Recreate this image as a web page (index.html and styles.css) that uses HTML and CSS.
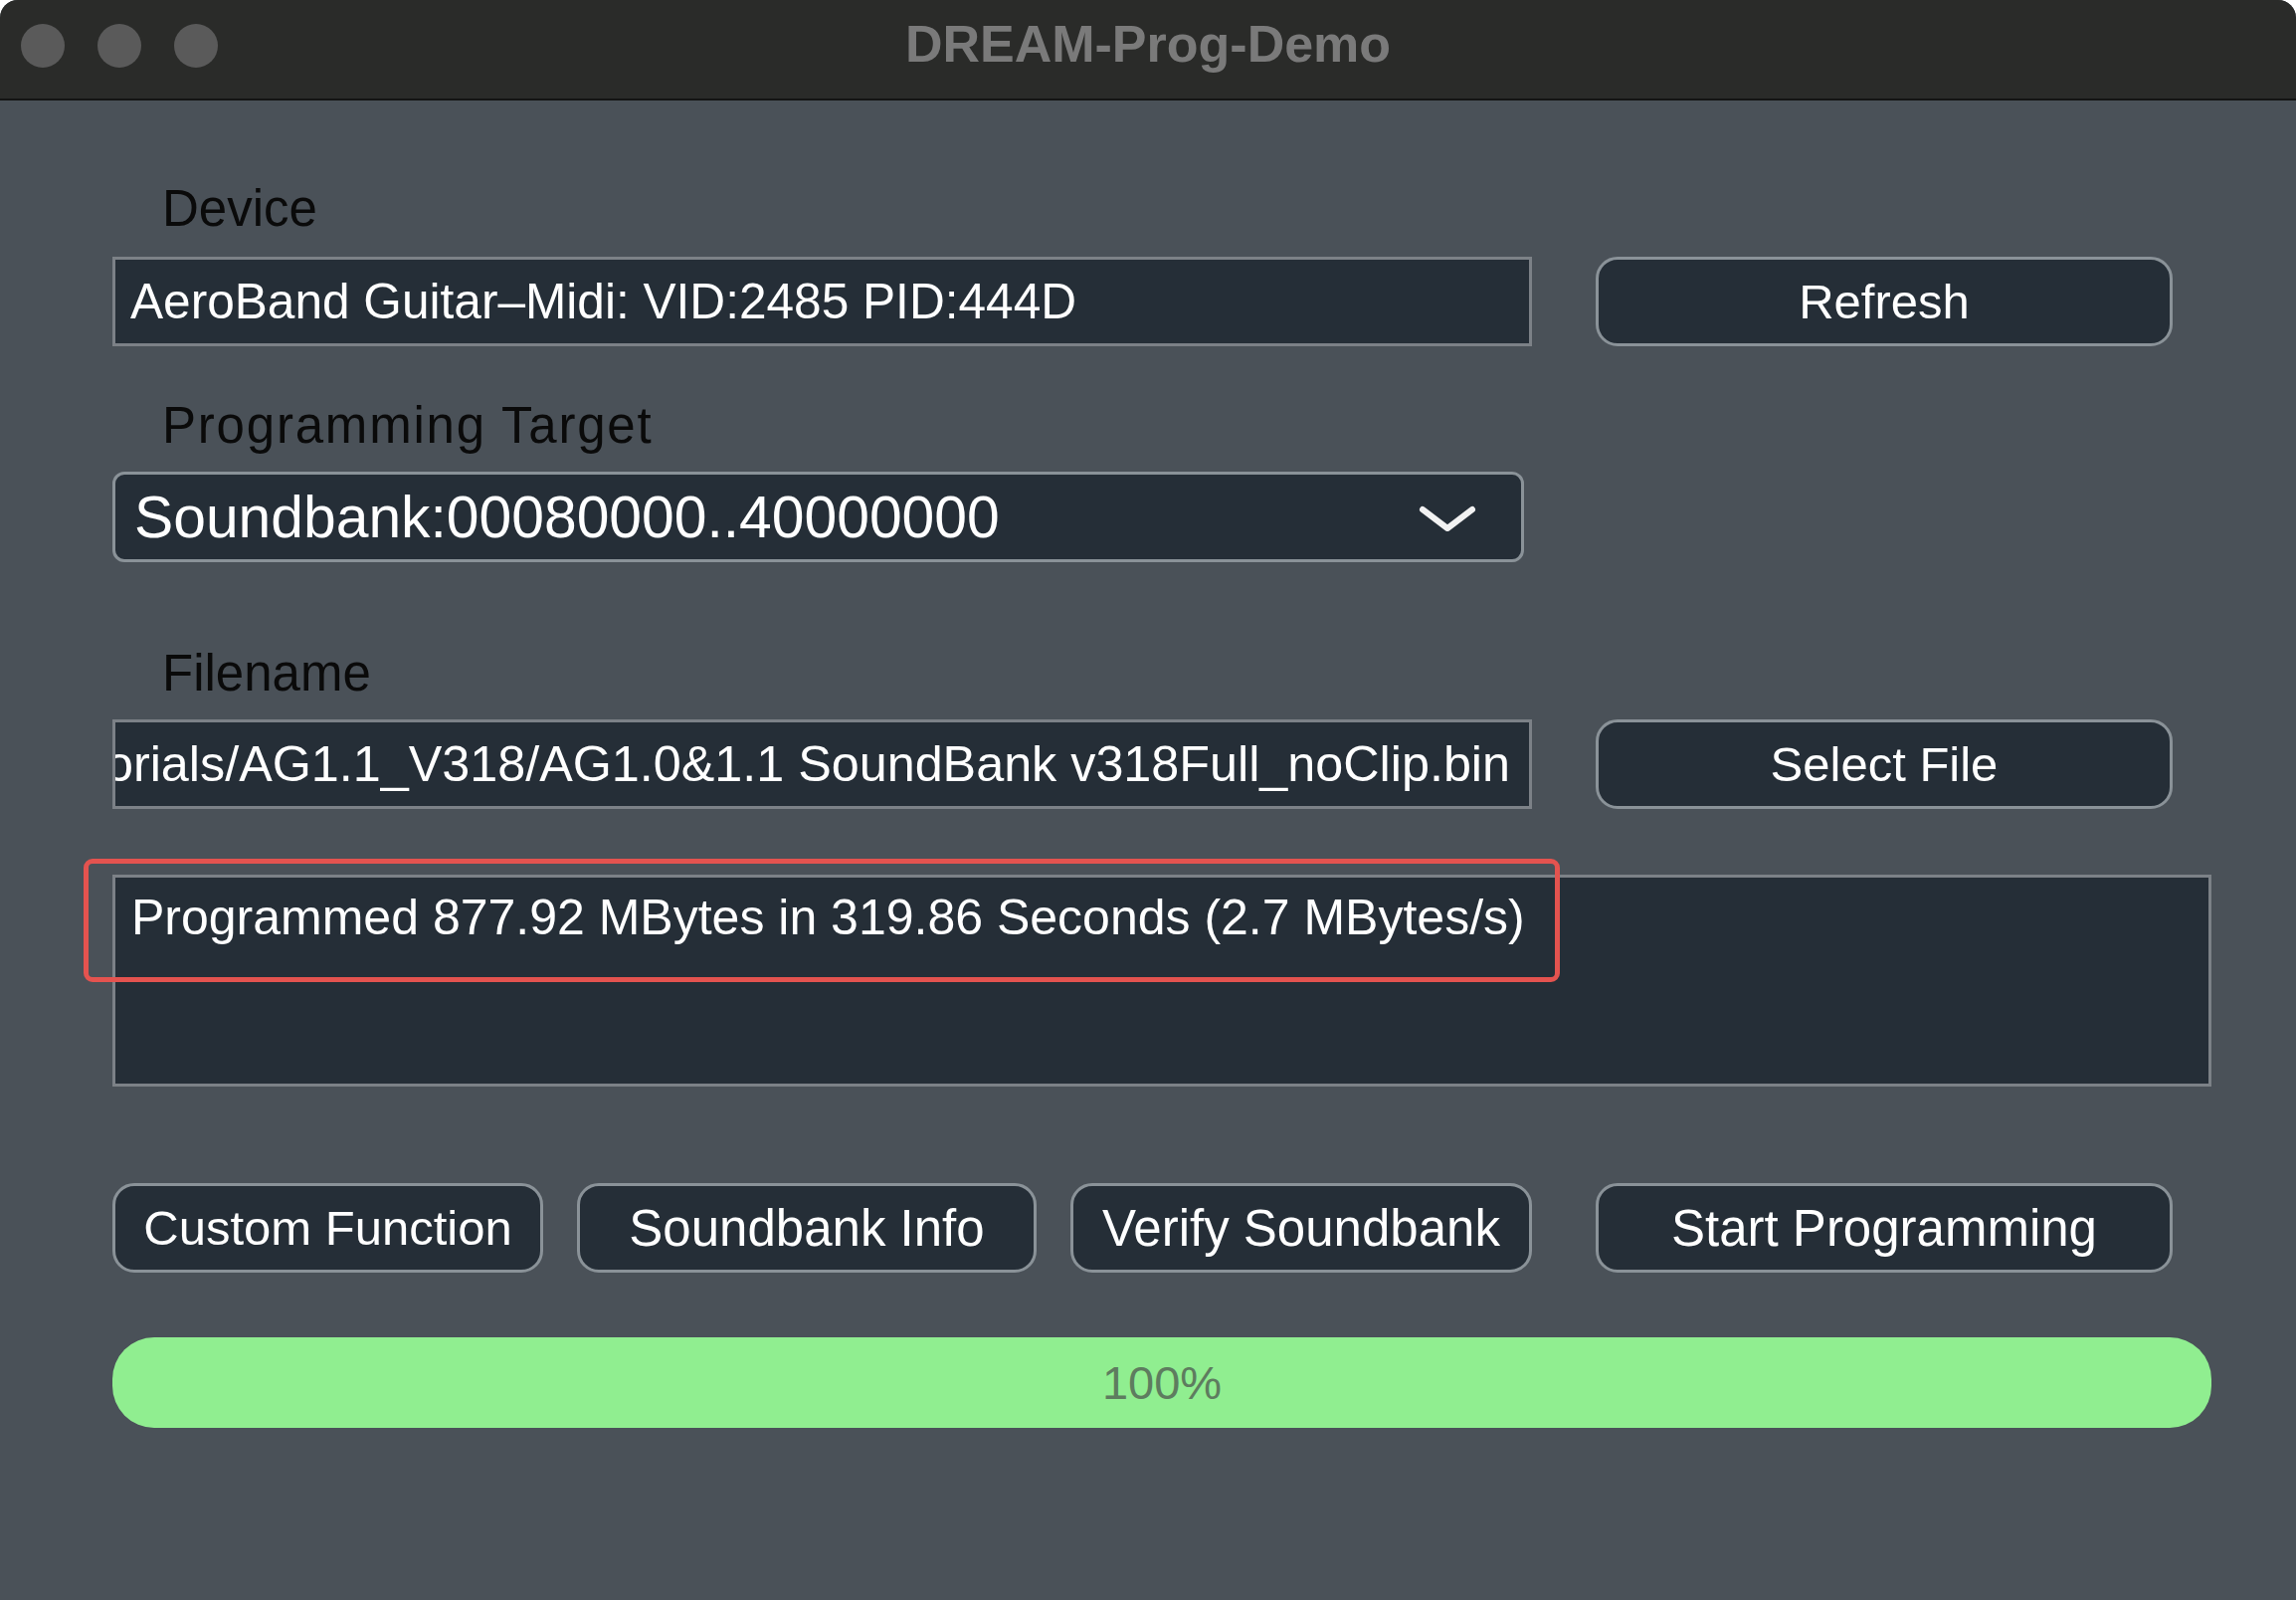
FILE: index.html
```html
<!DOCTYPE html>
<html>
<head>
    <title>DREAM-Prog-Demo</title>
    <link rel="stylesheet" href="styles.css">
</head>
<body>
    <div class="window">
        <div class="titlebar">
            <div class="lights">
                <span class="light"></span>
                <span class="light"></span>
                <span class="light"></span>
            </div>
            <div class="title">DREAM-Prog-Demo</div>
            <div></div>
        </div>

        <div class="content">
            <div class="label">Device</div>
            <div class="row">
                <div class="field">AeroBand Guitar–Midi: VID:2485 PID:444D</div>
                <button class="button">Refresh</button>
            </div>

            <div class="label label-gap label-wide">Programming Target</div>
            <div class="combo">
                <span>Soundbank:00080000..40000000</span>
                <svg class="chevron" width="58" height="28" viewBox="0 0 58 28">
                    <polyline points="4,4 29,23 54,4" fill="none" stroke="#f2f2f2" stroke-width="6" stroke-linecap="round" stroke-linejoin="round"/>
                </svg>
            </div>

            <div class="label label-gap-big">Filename</div>
            <div class="row">
                <div class="field field-path"><span>/Users/demo/Documents/Tutorials/AG1.1_V318/AG1.0&amp;1.1 SoundBank v318Full_noClip.bin</span></div>
                <button class="button">Select File</button>
            </div>

            <div class="log">
                <div class="log-line">Programmed 877.92 MBytes in 319.86 Seconds (2.7 MBytes/s)</div>
                <div class="highlight"></div>
            </div>

            <div class="actions">
                <button class="button btn-custom">Custom Function</button>
                <button class="button btn-info">Soundbank Info</button>
                <button class="button btn-verify">Verify Soundbank</button>
                <button class="button btn-start">Start Programming</button>
            </div>

            <div class="progress">100%</div>
        </div>
    </div>
</body>
</html>
```

FILE: styles.css
```css
body {
    margin: 0;
    background-color: #ffffff;
    font-family: "Liberation Sans", Arial, sans-serif;
}
.window {
    width: 2308px;
    height: 1608px;
    background-color: #4a5158;
    border-radius: 18px 18px 0 0;
    overflow: hidden;
}
.titlebar {
    height: 99px;
    background-color: #2a2b29;
    border-bottom: 2px solid #141414;
    display: grid;
    grid-template-columns: 1fr auto 1fr;
    align-items: center;
}
.lights {
    display: flex;
    gap: 33px;
    padding-left: 21px;
    padding-bottom: 8px;
}
.light {
    width: 44px;
    height: 44px;
    border-radius: 50%;
    background-color: #5a5a5a;
}
.title {
    color: #7a7a7a;
    font-weight: bold;
    font-size: 52px;
    padding-bottom: 12px;
}
.content {
    padding: 79px 0 0 113px;
}
.label {
    height: 60px;
    line-height: 60px;
    padding-left: 50px;
    font-size: 51px;
    color: #0a0a0a;
    margin-bottom: 18px;
}
.label-wide {
    letter-spacing: 1.8px;
}
.label-gap {
    margin-top: 50px;
    margin-bottom: 16px;
}
.label-gap-big {
    margin-top: 82px;
    margin-bottom: 16px;
}
.row {
    display: flex;
    gap: 64px;
}
.field {
    box-sizing: border-box;
    width: 1427px;
    height: 90px;
    line-height: 84px;
    padding: 0 18px 0 15px;
    background-color: #252e37;
    border: 3px solid #7c8187;
    color: #ffffff;
    font-size: 49.6px;
    white-space: nowrap;
    overflow: hidden;
}
.field-path {
    display: flex;
    justify-content: flex-end;
    padding: 0 19px 0 0;
    font-size: 50.3px;
}
.button {
    box-sizing: border-box;
    width: 580px;
    height: 90px;
    background-color: #252e37;
    border: 3px solid #8a9298;
    border-radius: 22px;
    color: #ffffff;
    font-family: "Liberation Sans", Arial, sans-serif;
    font-size: 49px;
    padding: 0;
    cursor: pointer;
}
.combo {
    box-sizing: border-box;
    width: 1419px;
    height: 91px;
    display: flex;
    align-items: center;
    justify-content: space-between;
    padding: 0 45px 0 19px;
    background-color: #252e37;
    border: 3px solid #8a9298;
    border-radius: 12px;
    color: #ffffff;
    font-size: 58.8px;
}
.chevron {
    display: block;
    margin-top: 4px;
}
.log {
    position: relative;
    box-sizing: border-box;
    width: 2110px;
    height: 213px;
    margin-top: 66px;
    background-color: #252e37;
    border: 3px solid #7c8187;
    padding: 10px 0 0 16px;
    color: #ffffff;
    font-size: 50px;
}
.log-line {
    line-height: 60px;
    white-space: nowrap;
}
.highlight {
    position: absolute;
    left: -32px;
    top: -19px;
    width: 1484px;
    height: 124px;
    box-sizing: border-box;
    border: 5px solid #e4534f;
    border-radius: 9px;
}
.actions {
    display: flex;
    margin-top: 97px;
}
.actions .button {
    font-size: 51px;
}
.btn-custom {
    width: 433px !important;
    font-size: 49px !important;
}
.btn-info {
    width: 462px !important;
    margin-left: 34px;
}
.btn-verify {
    width: 464px !important;
    margin-left: 34px;
}
.btn-start {
    margin-left: 64px;
}
.progress {
    width: 2110px;
    height: 91px;
    margin-top: 65px;
    background-color: #90ee90;
    border-radius: 42px;
    text-align: center;
    line-height: 91px;
    color: #5e7c5f;
    font-size: 47px;
}
```
